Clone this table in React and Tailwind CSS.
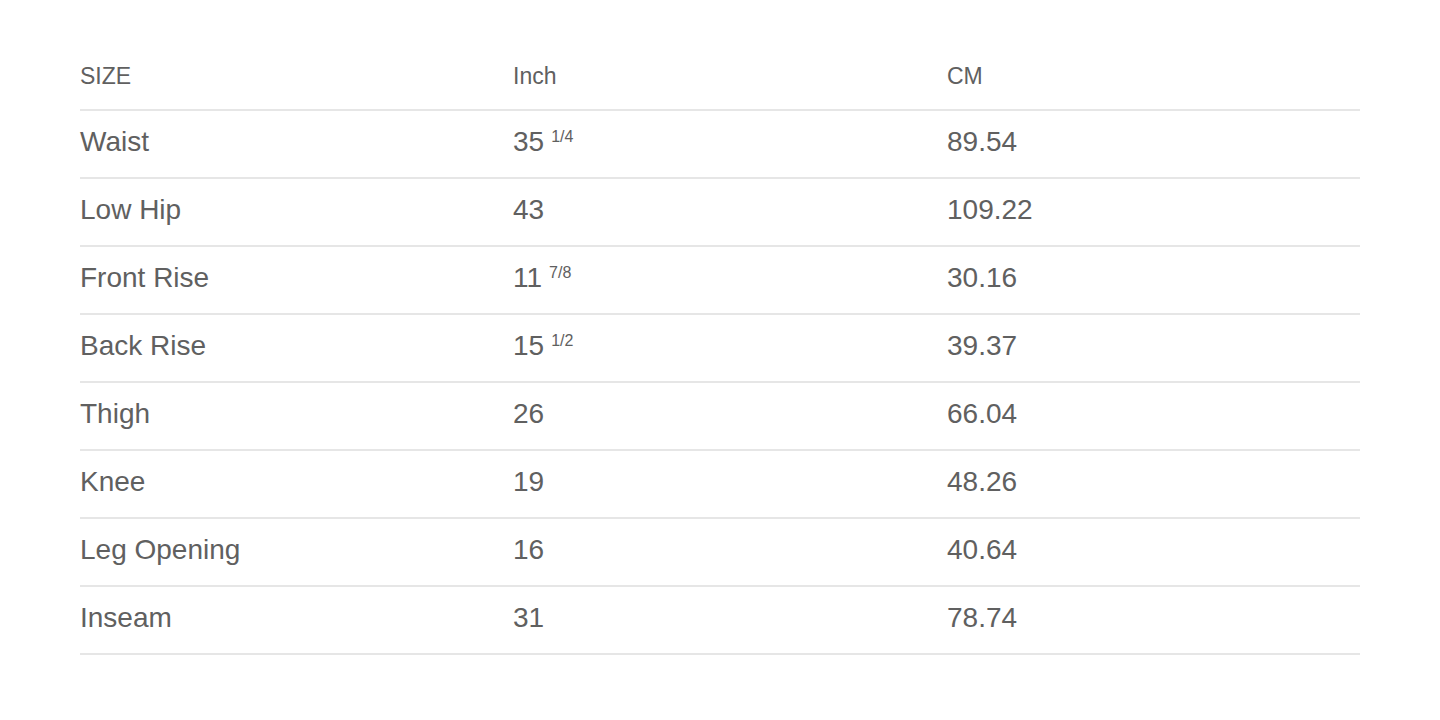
import React from "react";

const ROWS = [
  { name: "Waist", inch: "35", frac: "1/4", cm: "89.54" },
  { name: "Low Hip", inch: "43", cm: "109.22" },
  { name: "Front Rise", inch: "11", frac: "7/8", cm: "30.16" },
  { name: "Back Rise", inch: "15", frac: "1/2", cm: "39.37" },
  { name: "Thigh", inch: "26", cm: "66.04" },
  { name: "Knee", inch: "19", cm: "48.26" },
  { name: "Leg Opening", inch: "16", cm: "40.64" },
  { name: "Inseam", inch: "31", cm: "78.74" },
];

export default function App() {
  return (
    <div className="w-[1440px] h-[720px] bg-white px-[80px] pt-[43px] text-[#606060] font-['Liberation_Sans',Arial,sans-serif]">
      {/* header */}
      <div className="grid grid-cols-[433px_434px_1fr] h-[68px] items-center border-b-2 border-[#e6e6e6] text-[23px]">
        <div>SIZE</div>
        <div>Inch</div>
        <div>CM</div>
      </div>

      {ROWS.map((r) => (
        <div
          key={r.name}
          className="grid grid-cols-[433px_434px_1fr] h-[68px] items-center pb-[4px] border-b-2 border-[#e6e6e6] text-[28px]"
        >
          <div>{r.name}</div>
          <div className="flex items-start">
            <span>{r.inch}</span>
            {r.frac && (
              <span className="ml-[7px] text-[16px] leading-none relative top-[8px]">{r.frac}</span>
            )}
          </div>
          <div>{r.cm}</div>
        </div>
      ))}
    </div>
  );
}
